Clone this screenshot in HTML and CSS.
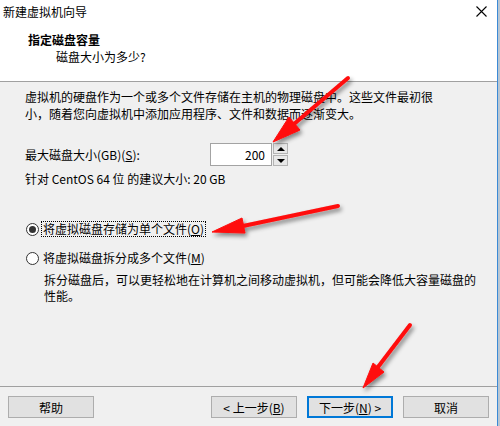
FILE: index.html
```html
<!DOCTYPE html>
<html lang="zh-CN">
<head>
  <meta charset="UTF-8" />
  <title>新建虚拟机向导</title>
  <link rel="stylesheet" href="styles.css">
</head>
<body>

  <div class="window">
    <div class="header">
      <div class="titlebar">
        <span class="title">新建虚拟机向导</span>
        <svg class="close" width="11" height="11" viewBox="0 0 11 11">
          <path d="M0.5 0.5 L10.5 10.5 M10.5 0.5 L0.5 10.5" stroke="#000" stroke-width="1.1" fill="none" />
        </svg>
      </div>
      <div class="heading">指定磁盘容量</div>
      <div class="subheading">磁盘大小为多少?</div>
    </div>

    <div class="content">
      <p class="intro">虚拟机的硬盘作为一个或多个文件存储在主机的物理磁盘中。这些文件最初很<br>小，随着您向虚拟机中添加应用程序、文件和数据而逐渐变大。</p>

      <div class="size-row">
        <label class="size-label">最大磁盘大小(GB)(<u>S</u>):</label>
        <div class="spin">
          <div class="spin-value">200</div>
          <div class="spin-btns">
            <div class="spin-btn"><span class="tri-up"></span></div>
            <div class="spin-btn"><span class="tri-down"></span></div>
          </div>
        </div>
      </div>

      <p class="hint">针对 CentOS 64 位 的建议大小: 20 GB</p>

      <div class="option first">
        <span class="radio checked"></span>
        <span class="option-text focused">将虚拟磁盘存储为单个文件(<u>O</u>)</span>
      </div>
      <div class="option">
        <span class="radio"></span>
        <span class="option-text">将虚拟磁盘拆分成多个文件(<u>M</u>)</span>
      </div>
      <p class="option-desc">拆分磁盘后，可以更轻松地在计算机之间移动虚拟机，但可能会降低大容量磁盘的<br>性能。</p>
    </div>

    <div class="footer">
      <button class="btn">帮助</button>
      <div class="nav">
        <button class="btn">&lt; 上一步(<u>B</u>)</button>
        <button class="btn primary">下一步(<u>N</u>) &gt;</button>
        <button class="btn">取消</button>
      </div>
    </div>
  </div>

  <!-- red arrows drawn over the screenshot -->
  <svg class="arrows" width="500" height="426" viewBox="0 0 500 426">
    <defs>
      <filter id="shadow" x="-20%" y="-20%" width="140%" height="140%">
        <feDropShadow dx="2" dy="3" stdDeviation="2" flood-color="#000" flood-opacity="0.45" />
      </filter>
    </defs>
    <g fill="#ff0a0a" stroke="#ff0a0a" filter="url(#shadow)">
      <line x1="348" y1="78" x2="294" y2="124" stroke-width="4" stroke-linecap="round" />
      <polygon points="273,142 300,130 289,117" stroke-width="1" />

      <line x1="338" y1="206" x2="243" y2="226" stroke-width="4" stroke-linecap="round" />
      <polygon points="212,232 245,233 242,218" stroke-width="1" />

      <line x1="410" y1="325" x2="378" y2="367" stroke-width="4" stroke-linecap="round" />
      <polygon points="363,388 384,372 373,363" stroke-width="1" />
    </g>
  </svg>

</body>
</html>
```

FILE: styles.css
```css
body {
  margin: 0;
  width: 500px;
  height: 426px;
  overflow: hidden;
  background: #b9c6d2;
  font-family: "Noto Sans CJK SC", "Noto Sans", sans-serif;
  font-size: 12px;
  color: #000;
  position: relative;
}
.window {
  width: 497px;
  height: 426px;
  background: #f0f0f0;
  border-right: 1px solid #3b8ad6;
  display: flex;
  flex-direction: column;
}
.header {
  height: 81px;
  background: #fff;
  border-bottom: 1px solid #a0a0a0;
  flex-shrink: 0;
}
.titlebar {
  height: 24px;
  display: flex;
  align-items: center;
  justify-content: space-between;
  padding: 0 10px 0 3px;
}
.title {
  line-height: 24px;
}
.close {
  display: block;
  margin-top: -1px;
}
.heading {
  margin: 8px 0 0 28px;
  font-weight: bold;
  line-height: 16px;
}
.subheading {
  margin: 1px 0 0 56px;
  line-height: 16px;
}
.content {
  height: 304px;
  padding: 6px 0 0 25px;
  box-sizing: border-box;
  flex-shrink: 0;
}
p {
  margin: 0;
}
.intro {
  line-height: 17px;
}
.size-row {
  display: flex;
  align-items: center;
  margin-top: 21px;
  height: 23px;
}
.size-label {
  width: 185px;
}
.spin {
  display: flex;
  gap: 1px;
}
.spin-value {
  width: 62px;
  height: 23px;
  box-sizing: border-box;
  border: 1px solid #a3a3a3;
  background: #fff;
  text-align: right;
  padding-right: 6px;
  line-height: 21px;
}
.spin-btns {
  display: flex;
  flex-direction: column;
  gap: 1px;
}
.spin-btn {
  width: 15px;
  height: 11px;
  box-sizing: border-box;
  border: 1px solid #b4b4b4;
  background: #e8e8e8;
  display: flex;
  align-items: center;
  justify-content: center;
}
.tri-up {
  border-left: 4px solid transparent;
  border-right: 4px solid transparent;
  border-bottom: 4px solid #000;
}
.tri-down {
  border-left: 4px solid transparent;
  border-right: 4px solid transparent;
  border-top: 4px solid #000;
}
.hint {
  margin-top: 6px;
  line-height: 14px;
}
.option {
  display: flex;
  align-items: center;
  height: 16px;
  margin-top: 13px;
}
.option.first {
  margin-top: 35px;
}
.radio {
  width: 13px;
  height: 13px;
  box-sizing: border-box;
  border: 1px solid #333;
  border-radius: 50%;
  background: #fff;
  margin-left: 1px;
  margin-right: 2px;
  display: flex;
  align-items: center;
  justify-content: center;
}
.radio.checked::after {
  content: "";
  width: 7px;
  height: 7px;
  border-radius: 50%;
  background: #333;
}
.option-text {
  line-height: 14px;
  padding: 0 1px;
  border: 1px dotted transparent;
}
.option-text.focused {
  border-color: #000;
}
.option-desc {
  margin: 6px 0 0 19px;
  line-height: 16px;
}
.footer {
  flex: 1;
  border-top: 1px solid #a0a0a0;
  display: flex;
  justify-content: space-between;
  padding: 9px 8px 0 8px;
}
.nav {
  display: flex;
  gap: 10px;
}
.btn {
  width: 86px;
  height: 22px;
  box-sizing: border-box;
  background: #e1e1e1;
  border: 1px solid #adadad;
  font-family: inherit;
  font-size: 12px;
  padding: 0;
  color: #000;
}
.btn.primary {
  border: 2px solid #0078d7;
}
.arrows {
  position: absolute;
  left: 0;
  top: 0;
  pointer-events: none;
}
```
